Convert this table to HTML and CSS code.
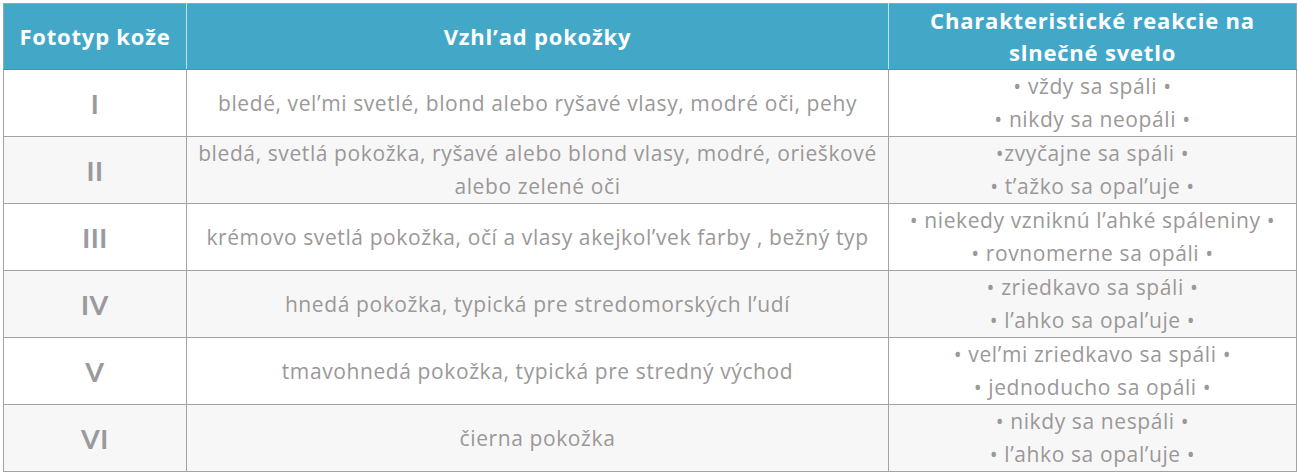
FILE: index.html
```html
<!DOCTYPE html>
<html lang="sk">
<head>
<meta charset="utf-8">
<title>Fototypy kože</title>
<link rel="stylesheet" href="styles.css">
</head>
<body>
<table class="skin-table">
  <colgroup>
    <col class="col-type">
    <col class="col-look">
    <col class="col-react">
  </colgroup>
  <thead>
    <tr>
      <th>Fototyp kože</th>
      <th>Vzhl’ad pokožky</th>
      <th>Charakteristické reakcie na<br>slnečné svetlo</th>
    </tr>
  </thead>
  <tbody>
    <tr>
      <td class="type">I</td>
      <td>bledé, vel’mi svetlé, blond alebo ryšavé vlasy, modré oči, pehy</td>
      <td>• vždy sa spáli •<br>• nikdy sa neopáli •</td>
    </tr>
    <tr>
      <td class="type">II</td>
      <td>bledá, svetlá pokožka, ryšavé alebo blond vlasy, modré, orieškové<br>alebo zelené oči</td>
      <td>•zvyčajne sa spáli •<br>• t’ažko sa opal’uje •</td>
    </tr>
    <tr>
      <td class="type">III</td>
      <td>krémovo svetlá pokožka, očí a vlasy akejkol’vek farby , bežný typ</td>
      <td>• niekedy vzniknú l’ahké spáleniny •<br>• rovnomerne sa opáli •</td>
    </tr>
    <tr>
      <td class="type">IV</td>
      <td>hnedá pokožka, typická pre stredomorských l’udí</td>
      <td>• zriedkavo sa spáli •<br>• l’ahko sa opal’uje •</td>
    </tr>
    <tr>
      <td class="type">V</td>
      <td>tmavohnedá pokožka, typická pre stredný východ</td>
      <td>• vel’mi zriedkavo sa spáli •<br>• jednoducho sa opáli •</td>
    </tr>
    <tr>
      <td class="type">VI</td>
      <td>čierna pokožka</td>
      <td>• nikdy sa nespáli •<br>• l’ahko sa opal’uje •</td>
    </tr>
  </tbody>
</table>
</body>
</html>
```

FILE: styles.css
```css
html, body {
  margin: 0;
  padding: 0;
  background: #ffffff;
}

body {
  padding: 3px 2px 0 3px;
  font-family: "Open Sans", Lato, sans-serif;
}

.skin-table {
  width: 1293px;
  border-collapse: collapse;
  table-layout: fixed;
  border: 1px solid #a3a3a3;
}

.col-type { width: 183px; }
.col-look { width: 702px; }
.col-react { width: 408px; }

.skin-table th {
  background: #43a8c8;
  color: #ffffff;
  font-weight: 700;
  font-size: 22px;
  letter-spacing: 0.8px;
  line-height: 32px;
  height: 65px;
  padding: 0 2px 1px;
  text-align: center;
  vertical-align: middle;
  border-left: 1px solid #bfe2ee;
  border-bottom: 1px solid #3b97b4;
  box-sizing: border-box;
}

.skin-table th:first-child { border-left: none; }

.skin-table td {
  color: #9b9898;
  font-size: 21px;
  letter-spacing: 0.6px;
  line-height: 33px;
  height: 67px;
  padding: 0 2px;
  text-align: center;
  vertical-align: middle;
  border: 1px solid #a3a3a3;
  box-sizing: border-box;
}

.skin-table tbody tr:nth-child(even) td {
  background: #f7f7f7;
}

.skin-table td.type {
  font-family: Lato, "Open Sans", sans-serif;
  font-size: 27px;
  font-weight: 700;
  letter-spacing: 0.5px;
  color: #9a9a9e;
}
```
